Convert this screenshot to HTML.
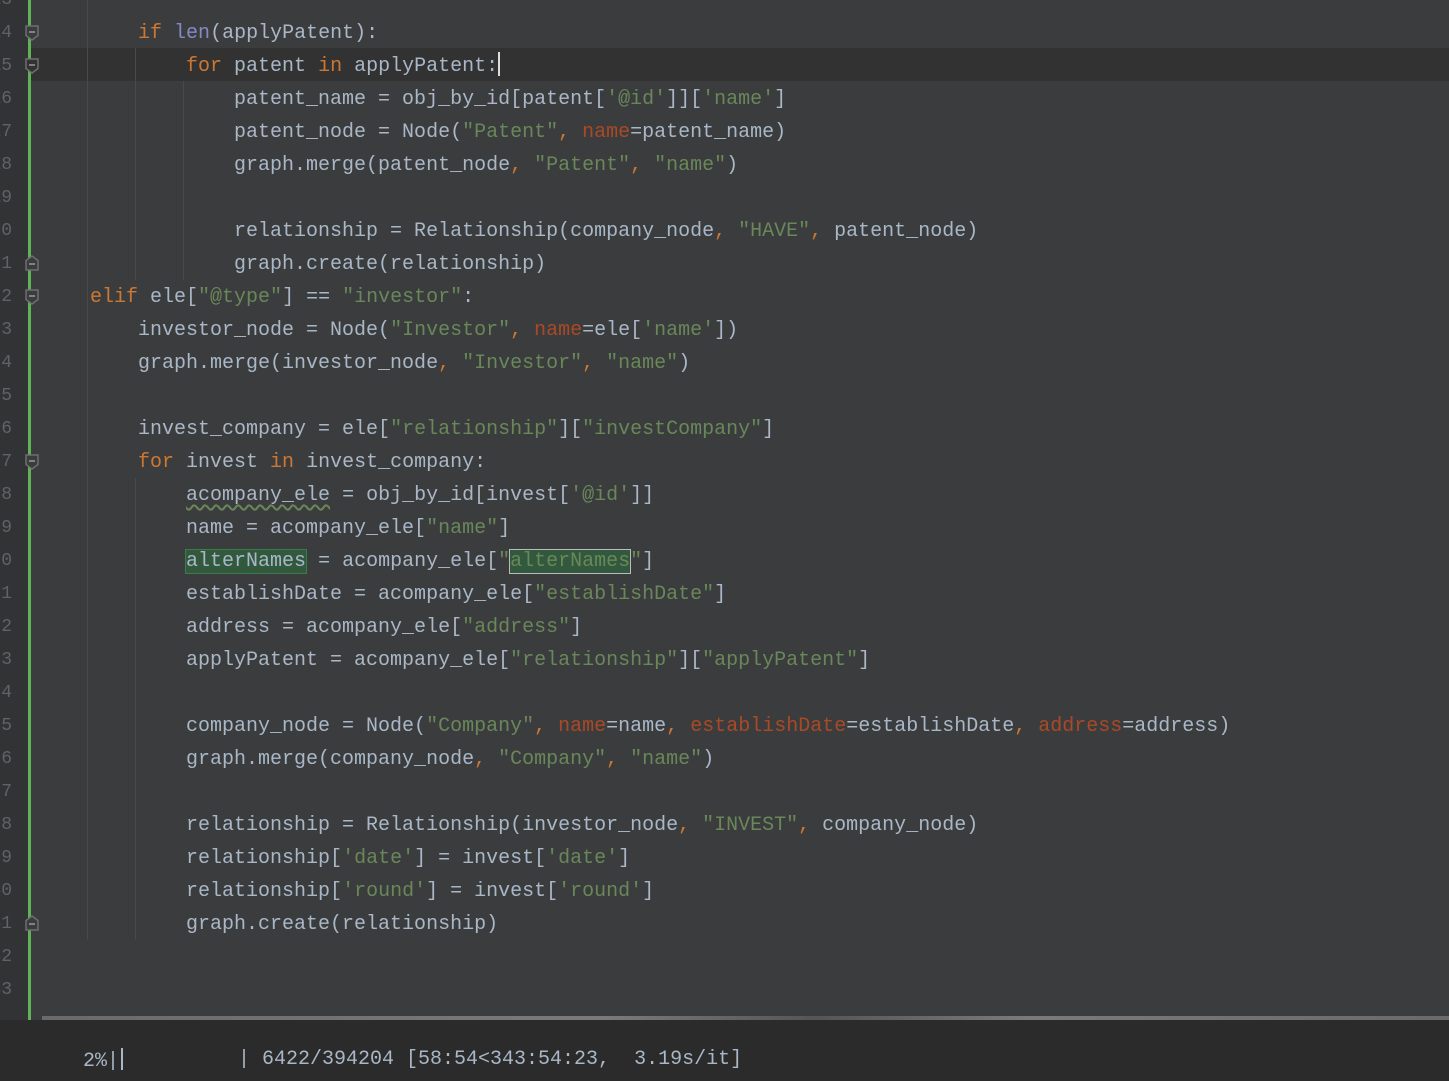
<!DOCTYPE html><html><head><style>
body{margin:0;width:1449px;height:1081px;overflow:hidden;background:#3b3c3e;font-family:"Liberation Mono",monospace;font-size:20px;position:relative}
.g{position:absolute;left:0;top:0;width:28px;height:1020px;background:#313335}
.bar{position:absolute;left:28px;top:0;width:3px;height:1020px;background:#5fb356}
.cur{position:absolute;left:31px;top:48px;right:0;height:33px;background:#323232}
.gl{position:absolute;width:1px;background:#47494b}
.l{position:absolute;left:42px;height:33px;line-height:33px;color:#a9b7c6;white-space:pre}
.n{position:absolute;left:-20px;width:32px;text-align:right;height:33px;line-height:33px;color:#5f6367;font-size:18px}
.k{color:#cc7832}.s{color:#6a8759}.b{color:#8888c6}.p{color:#aa4926}
.f{position:absolute;left:25px;width:14px;height:16px}
.bot{position:absolute;left:0;top:1020px;width:1449px;height:61px;background:#2b2b2b;color:#a9b7c6}
.sb{position:absolute;left:42px;top:1016px;right:0;height:4px;background:linear-gradient(90deg,#6a6a6a,#7a7a7a 40%,#555 55%,#7a7a7a 70%,#6a6a6a)}
.hl{background:#32593d;outline:1px solid #3d7a4a}
</style></head><body>
<div class="g"></div>
<div class="cur"></div>
<div class="bar"></div>
<div class="gl" style="left:87px;top:0;height:940px"></div>
<div class="gl" style="left:135px;top:48px;height:232px"></div>
<div class="gl" style="left:183px;top:81px;height:199px"></div>
<div class="gl" style="left:135px;top:478px;height:462px"></div>

<div class="n" style="top:-16px">13</div>
<div class="n" style="top:17px">14</div><div class="l" style="top:17px">        <span class="k">if</span> <span class="b">len</span>(applyPatent):</div>
<svg class="f" style="top:25px" viewBox="0 0 14 16"><path d="M1 1H13V10.5L7 15L1 10.5Z" fill="#3b3c3e" stroke="#6e6e6e" stroke-width="1.5"/><path d="M4 7H10" stroke="#999" stroke-width="1.5"/></svg>
<div class="n" style="top:50px">15</div><div class="l" style="top:50px">            <span class="k">for</span> patent <span class="k">in</span> applyPatent:<span style="display:inline-block;width:2px;height:24px;background:#ddd;vertical-align:-5px"></span></div>
<svg class="f" style="top:58px" viewBox="0 0 14 16"><path d="M1 1H13V10.5L7 15L1 10.5Z" fill="#323232" stroke="#6e6e6e" stroke-width="1.5"/><path d="M4 7H10" stroke="#999" stroke-width="1.5"/></svg>
<div class="n" style="top:83px">16</div><div class="l" style="top:83px">                patent_name = obj_by_id[patent[<span class="s">'@id'</span>]][<span class="s">'name'</span>]</div>
<div class="n" style="top:116px">17</div><div class="l" style="top:116px">                patent_node = Node(<span class="s">"Patent"</span><span class="k">,</span> <span class="p">name</span>=patent_name)</div>
<div class="n" style="top:149px">18</div><div class="l" style="top:149px">                graph.merge(patent_node<span class="k">,</span> <span class="s">"Patent"</span><span class="k">,</span> <span class="s">"name"</span>)</div>
<div class="n" style="top:182px">19</div>
<div class="n" style="top:215px">20</div><div class="l" style="top:215px">                relationship = Relationship(company_node<span class="k">,</span> <span class="s">"HAVE"</span><span class="k">,</span> patent_node)</div>
<div class="n" style="top:248px">21</div><div class="l" style="top:248px">                graph.create(relationship)</div>
<svg class="f" style="top:255px" viewBox="0 0 14 16"><path d="M1 15H13V5.5L7 1L1 5.5Z" fill="#3b3c3e" stroke="#6e6e6e" stroke-width="1.5"/><path d="M4 9H10" stroke="#999" stroke-width="1.5"/></svg>
<div class="n" style="top:281px">22</div><div class="l" style="top:281px">    <span class="k">elif</span> ele[<span class="s">"@type"</span>] == <span class="s">"investor"</span>:</div>
<svg class="f" style="top:289px" viewBox="0 0 14 16"><path d="M1 1H13V10.5L7 15L1 10.5Z" fill="#3b3c3e" stroke="#6e6e6e" stroke-width="1.5"/><path d="M4 7H10" stroke="#999" stroke-width="1.5"/></svg>
<div class="n" style="top:314px">23</div><div class="l" style="top:314px">        investor_node = Node(<span class="s">"Investor"</span><span class="k">,</span> <span class="p">name</span>=ele[<span class="s">'name'</span>])</div>
<div class="n" style="top:347px">24</div><div class="l" style="top:347px">        graph.merge(investor_node<span class="k">,</span> <span class="s">"Investor"</span><span class="k">,</span> <span class="s">"name"</span>)</div>
<div class="n" style="top:380px">25</div>
<div class="n" style="top:413px">26</div><div class="l" style="top:413px">        invest_company = ele[<span class="s">"relationship"</span>][<span class="s">"investCompany"</span>]</div>
<div class="n" style="top:446px">27</div><div class="l" style="top:446px">        <span class="k">for</span> invest <span class="k">in</span> invest_company:</div>
<svg class="f" style="top:454px" viewBox="0 0 14 16"><path d="M1 1H13V10.5L7 15L1 10.5Z" fill="#3b3c3e" stroke="#6e6e6e" stroke-width="1.5"/><path d="M4 7H10" stroke="#999" stroke-width="1.5"/></svg>
<div class="n" style="top:479px">28</div><div class="l" style="top:479px">            <span style="text-decoration:underline wavy #6a8759;text-underline-offset:4px">acompany_ele</span> = obj_by_id[invest[<span class="s">'@id'</span>]]</div>
<div class="n" style="top:512px">29</div><div class="l" style="top:512px">            name = acompany_ele[<span class="s">"name"</span>]</div>
<div class="n" style="top:545px">30</div><div class="l" style="top:545px">            <span class="hl">alterNames</span> = acompany_ele[<span class="s">"<span class="hl" style="outline-color:#bbb">alterNames</span>"</span>]</div>
<div class="n" style="top:578px">31</div><div class="l" style="top:578px">            establishDate = acompany_ele[<span class="s">"establishDate"</span>]</div>
<div class="n" style="top:611px">32</div><div class="l" style="top:611px">            address = acompany_ele[<span class="s">"address"</span>]</div>
<div class="n" style="top:644px">33</div><div class="l" style="top:644px">            applyPatent = acompany_ele[<span class="s">"relationship"</span>][<span class="s">"applyPatent"</span>]</div>
<div class="n" style="top:677px">34</div>
<div class="n" style="top:710px">35</div><div class="l" style="top:710px">            company_node = Node(<span class="s">"Company"</span><span class="k">,</span> <span class="p">name</span>=name<span class="k">,</span> <span class="p">establishDate</span>=establishDate<span class="k">,</span> <span class="p">address</span>=address)</div>
<div class="n" style="top:743px">36</div><div class="l" style="top:743px">            graph.merge(company_node<span class="k">,</span> <span class="s">"Company"</span><span class="k">,</span> <span class="s">"name"</span>)</div>
<div class="n" style="top:776px">37</div>
<div class="n" style="top:809px">38</div><div class="l" style="top:809px">            relationship = Relationship(investor_node<span class="k">,</span> <span class="s">"INVEST"</span><span class="k">,</span> company_node)</div>
<div class="n" style="top:842px">39</div><div class="l" style="top:842px">            relationship[<span class="s">'date'</span>] = invest[<span class="s">'date'</span>]</div>
<div class="n" style="top:875px">40</div><div class="l" style="top:875px">            relationship[<span class="s">'round'</span>] = invest[<span class="s">'round'</span>]</div>
<div class="n" style="top:908px">41</div><div class="l" style="top:908px">            graph.create(relationship)</div>
<svg class="f" style="top:915px" viewBox="0 0 14 16"><path d="M1 15H13V5.5L7 1L1 5.5Z" fill="#3b3c3e" stroke="#6e6e6e" stroke-width="1.5"/><path d="M4 9H10" stroke="#999" stroke-width="1.5"/></svg>
<div class="n" style="top:941px">42</div>
<div class="n" style="top:974px">43</div>

<div class="sb"></div>
<div class="bot"><span style="position:absolute;left:83px;top:28px;font-size:20px;line-height:24px;white-space:pre">2%|<span style="display:inline-block;width:2px;height:22px;background:#a9b7c6;vertical-align:-4px;margin-left:2px"></span></span><span style="position:absolute;left:238px;top:28px;font-size:20px;line-height:24px;white-space:pre">| 6422/394204 [58:54&lt;343:54:23,  3.19s/it]</span></div>
</body></html>
